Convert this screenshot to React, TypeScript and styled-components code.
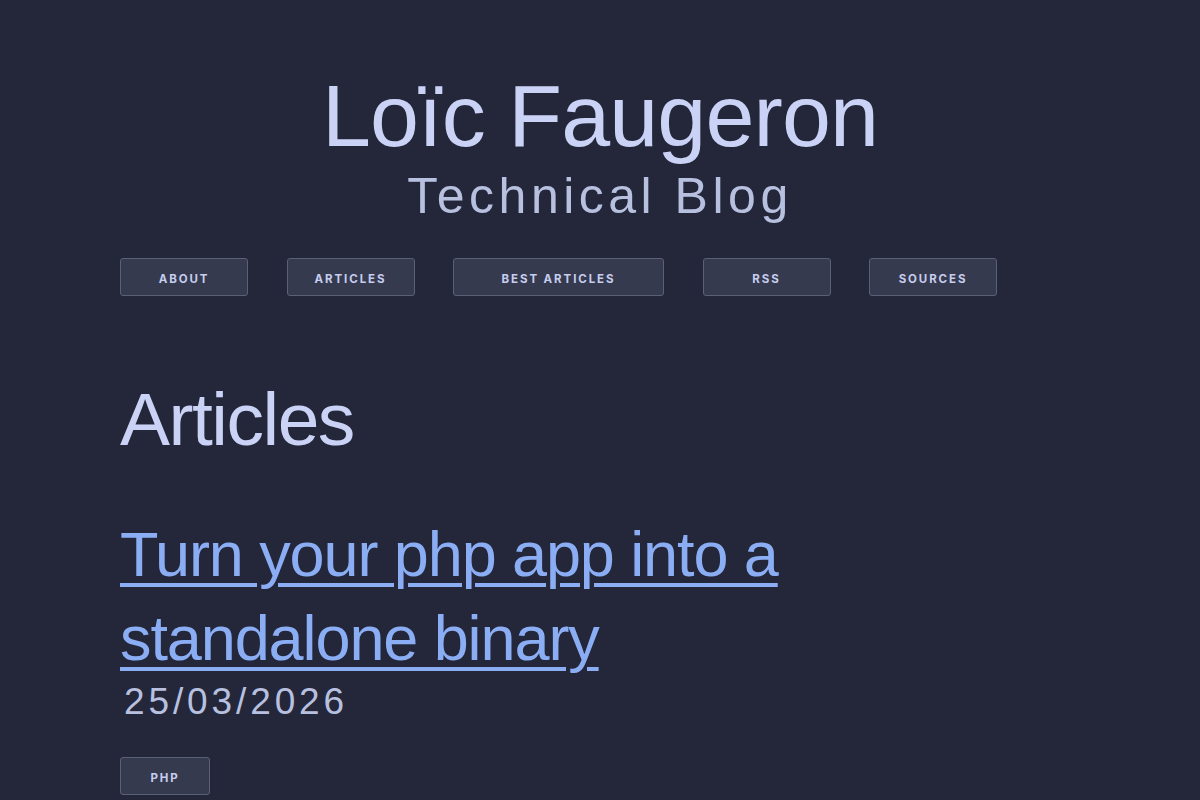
import styled, { createGlobalStyle } from "styled-components";

const Global = createGlobalStyle`
  html, body {
    margin: 0;
    padding: 0;
    background: #24273a;
  }
  body {
    font-family: "Liberation Sans", Arial, sans-serif;
    color: #cad3f5;
  }
`;

const Page = styled.div`
  width: 960px;
  margin: 0 auto;
  padding-top: 72px;
`;

const Header = styled.header`
  display: flex;
  flex-direction: column;
  align-items: center;
`;

const Title = styled.h1`
  margin: 0;
  font-size: 88px;
  font-weight: 400;
  line-height: 1;
  letter-spacing: -0.01em;
  color: #cad3f5;
`;

const Subtitle = styled.div`
  margin-top: 11px;
  font-size: 50px;
  line-height: 1;
  letter-spacing: 0.09em;
  color: #b8c0e0;
`;

const Nav = styled.nav`
  display: flex;
  gap: 38.5px;
  margin-top: 37px;
`;

const Button = styled.a<{ $width?: number }>`
  display: flex;
  align-items: center;
  justify-content: center;
  box-sizing: border-box;
  width: ${({ $width }) => $width ?? 128}px;
  height: 38px;
  padding-top: 3px;
  background: #363a4f;
  border: 1px solid #5b6078;
  border-radius: 3px;
  font-family: Inter, "Liberation Sans", sans-serif;
  font-size: 11.5px;
  font-weight: 700;
  letter-spacing: 1.9px;
  text-transform: uppercase;
  color: #c6cdee;
  text-decoration: none;
`;

const SectionTitle = styled.h2`
  margin: 86px 0 0;
  font-size: 75px;
  font-weight: 400;
  line-height: 1;
  letter-spacing: -0.02em;
  color: #cad3f5;
`;

const Article = styled.article`
  margin-top: 55px;
`;

const ArticleLink = styled.a`
  display: block;
  width: 700px;
  font-size: 63px;
  line-height: 84px;
  letter-spacing: -1.1px;
  color: #8aadf4;
  text-decoration: underline;
  text-decoration-thickness: 4px;
  text-underline-offset: 7px;
`;

const Date = styled.div`
  margin-top: 3px;
  padding-left: 4px;
  font-size: 37px;
  line-height: 1;
  letter-spacing: 0.105em;
  color: #b8c0e0;
`;

const Tags = styled.div`
  display: flex;
  gap: 12px;
  margin-top: 37px;
`;

const navItems = [
  { label: "About" },
  { label: "Articles" },
  { label: "Best articles", width: 211 },
  { label: "RSS" },
  { label: "Sources" },
];

export default function App() {
  return (
    <>
      <Global />
      <Page>
        <Header>
          <Title>Loïc Faugeron</Title>
          <Subtitle>Technical Blog</Subtitle>
        </Header>
        <Nav>
          {navItems.map((item) => (
            <Button key={item.label} href="#" $width={item.width}>
              {item.label}
            </Button>
          ))}
        </Nav>
        <SectionTitle>Articles</SectionTitle>
        <Article>
          <ArticleLink href="#">
            Turn your php app into a standalone binary
          </ArticleLink>
          <Date>25/03/2026</Date>
          <Tags>
            <Button href="#" $width={90}>
              php
            </Button>
          </Tags>
        </Article>
      </Page>
    </>
  );
}
